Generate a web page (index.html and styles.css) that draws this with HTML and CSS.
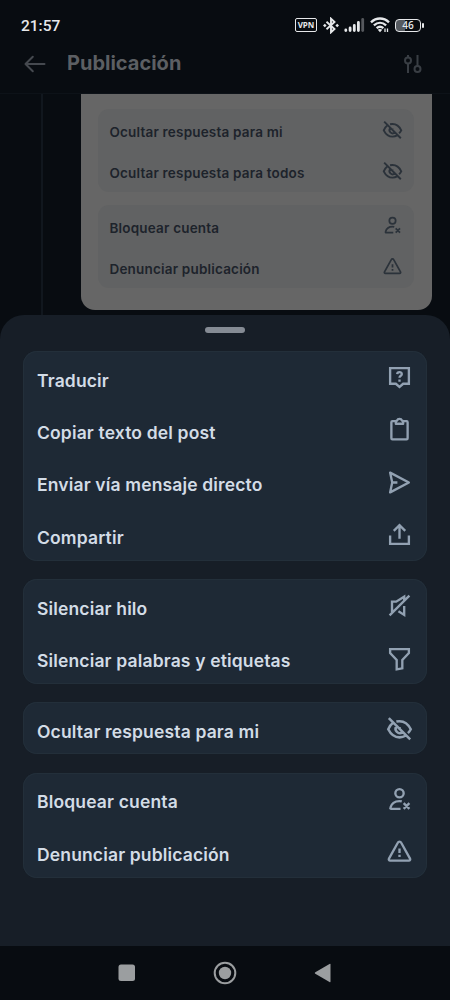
FILE: index.html
```html
<!DOCTYPE html>
<html lang="es">
<head>
<meta charset="utf-8">
<title>Publicación</title>
<link rel="stylesheet" href="styles.css">
</head>
<body>
<svg class="defs" width="0" height="0">
  <symbol id="eye-off" viewBox="0 0 24 24"><path d="M2.500 1.800l19 19M9.200 4.900c.9-.2 1.800-.3 2.800-.3 4.200 0 7.600 2.200 10 7.200-.7 1.400-1.500 2.500-2.500 3.400M6 6.300C4.400 7.500 3.100 9.400 2 11.800c2.500 5 5.800 7.200 10 7.200 1.900 0 3.700-.4 5.200-1.400M9.400 9.200a3.700 3.700 0 0 0 5.200 5.200M12 9.800v2.200"/></symbol>
  <symbol id="person-x" viewBox="0 0 24 24"><circle cx="12" cy="6" r="4"/><path d="M13 21H4c-.6 0-1-.5-.8-1 1-3.800 4.300-6.500 8.800-6.500.8 0 1.500.1 2.200.3M16 15.500l5.500 5.500M21.500 15.500l-5.500 5.500"/></symbol>
  <symbol id="warning" viewBox="0 0 24 24"><path stroke-linejoin="round" d="M12 2.500c-.7 0-1.200.3-1.500.9L1.900 18.800c-.5.900 0 1.900 1.100 1.900h18c1.100 0 1.600-1 1.100-1.900L13.500 3.400c-.3-.6-.8-.9-1.500-.9zM12 9v4.400M12 15v2.300"/></symbol>
  <symbol id="translate" viewBox="0 0 24 24"><path d="M3 3h18v15h-5.500L12 21 8.500 18H3z"/><path d="M9.800 8.800c.1-2.600 4.500-2.500 4.400 0 0 1.600-2.200 1.500-2.200 3.500M12 13.800v2.200"/></symbol>
  <symbol id="clipboard" viewBox="0 0 24 24"><path stroke-linejoin="round" d="M8 4H5.200a1 1 0 0 0-1 1V20.500a1 1 0 0 0 1 1h13.600a1 1 0 0 0 1-1V5a1 1 0 0 0-1-1H16M8.500 6.500V4.500c0-.6.400-1 1-1 1-2.200 4-2.200 5 0 .6 0 1 .4 1 1v2z"/></symbol>
  <symbol id="send" viewBox="0 0 24 24"><path stroke-linejoin="round" d="M3 2.500l18 9.500L3 21.500 5 12zM5 12H10"/></symbol>
  <symbol id="share" viewBox="0 0 24 24"><path d="M12 16V3.500M6.500 8.500L12 3l5.500 5.500M3 13V21h18v-8"/></symbol>
  <symbol id="mute" viewBox="0 0 24 24"><path d="M2.500 21.500L21.500 2.500M6.200 17.200H4.800V8.300h4L16.500 3.500v4M16.500 12.500V21l-5.500-3.500"/></symbol>
  <symbol id="filter" viewBox="0 0 24 24"><path d="M3 3h18v3.700L14.700 13.500V21.500l-5.400 1V13.500L3 6.700z"/></symbol>
</svg>

<div class="phone">
  <div class="status">
    <span class="clock">21:57</span>
    <div class="status-icons">
      <span class="vpn">VPN</span>
      <svg class="bluetooth" width="16" height="17" viewBox="0 0 16 17"><path d="M3.500 4.700l8 7.300L8 15.300V1.700L11.500 5l-8 7.300"/><path class="solid" d="M0 8.500l1.800-1.800 1.800 1.800-1.800 1.800zM12.400 8.500l1.800-1.800L16 8.500l-1.800 1.800z"/></svg>
      <svg class="signal" width="21" height="14" viewBox="0 0 21 14"><path d="M1.800 12v.5M6.100 10v2.500M10.300 7.500v5M14.400 4.500v8"/><path class="weak" d="M18.700 1.500v11"/></svg>
      <svg class="wifi" width="20" height="16" viewBox="0 0 20 16"><path d="M1 5.300c5.300-5 12.700-5 18 0M3.900 8.300c3.700-3.300 8.500-3.300 12.200 0M6.600 11.100c2.100-1.700 4.700-1.700 6.800 0"/><path class="solid" d="M10 15.200l-2.300-2.400q2.300-1.700 4.600 0z"/><path class="thin" d="M15 11.500v3.500M17.500 11.500v3.500"/></svg>
      <span class="battery">46</span>
    </div>
  </div>

  <header class="topbar">
    <svg class="back" width="22" height="18" viewBox="0 0 22 18"><path d="M20.500 9H1.500M8.800 1.700L1.500 9l7.300 7.300"/></svg>
    <h1>Publicación</h1>
    <svg class="settings" width="20" height="20" viewBox="0 0 20 20"><circle cx="5" cy="6.500" r="3"/><path d="M5 1v2.500M5 9.500V19M14.500 1v11"/><circle cx="14.500" cy="15" r="3"/></svg>
  </header>

  <main class="thread">
    <div class="post">
      <div class="group">
        <div class="row"><span>Ocultar respuesta para mi</span><svg class="eye"><use href="#eye-off"/></svg></div>
        <div class="row"><span>Ocultar respuesta para todos</span><svg class="eye"><use href="#eye-off"/></svg></div>
      </div>
      <div class="group">
        <div class="row"><span>Bloquear cuenta</span><svg><use href="#person-x"/></svg></div>
        <div class="row"><span>Denunciar publicación</span><svg><use href="#warning"/></svg></div>
      </div>
    </div>
  </main>

  <section class="sheet">
    <div class="handle"></div>
    <div class="group">
      <div class="row"><span>Traducir</span><svg><use href="#translate"/></svg></div>
      <div class="row"><span>Copiar texto del post</span><svg><use href="#clipboard"/></svg></div>
      <div class="row"><span>Enviar vía mensaje directo</span><svg><use href="#send"/></svg></div>
      <div class="row"><span>Compartir</span><svg><use href="#share"/></svg></div>
    </div>
    <div class="group">
      <div class="row"><span>Silenciar hilo</span><svg><use href="#mute"/></svg></div>
      <div class="row"><span>Silenciar palabras y etiquetas</span><svg><use href="#filter"/></svg></div>
    </div>
    <div class="group">
      <div class="row"><span>Ocultar respuesta para mi</span><svg class="eye"><use href="#eye-off"/></svg></div>
    </div>
    <div class="group">
      <div class="row"><span>Bloquear cuenta</span><svg><use href="#person-x"/></svg></div>
      <div class="row"><span>Denunciar publicación</span><svg><use href="#warning"/></svg></div>
    </div>
  </section>

  <nav class="navbar">
    <svg width="22" height="22" viewBox="0 0 22 22"><rect x="2.500" y="2.500" width="16.500" height="16.500" rx="2.500"/></svg>
    <svg width="24" height="24" viewBox="0 0 24 24"><circle class="ring" cx="12" cy="12" r="10.300"/><circle cx="12" cy="12" r="6.200"/></svg>
    <svg width="22" height="22" viewBox="0 0 22 22"><path d="M3.300 10.200L17.500 1.900q1-.5 1 .5v17.200q0 1-1 .5L3.300 11.800q-1.200-.8 0-1.600z"/></svg>
  </nav>
</div>
</body>
</html>
```
FILE: styles.css
```css
* { box-sizing: border-box; }

body {
  margin: 0;
  background: #080c11;
  font-family: Inter, Roboto, sans-serif;
}

.defs { display: block; }

.phone {
  display: flex;
  flex-direction: column;
  width: 450px;
  height: 1000px;
  overflow: hidden;
}

svg {
  flex: none;
  fill: none;
  stroke: currentColor;
  stroke-width: 2;
}

.status {
  flex: none;
  display: flex;
  justify-content: space-between;
  height: 36px;
  padding: 15px 29px 0 21px;
  color: #e6e8ea;
}

.clock {
  font: 500 15.500px/23px Roboto, sans-serif;
}

.status-icons {
  display: flex;
  align-items: center;
  height: 20px;
}

.vpn {
  width: 22px;
  height: 14px;
  border: 1.500px solid currentColor;
  border-radius: 2px;
  font: 700 8px/12px "Open Sans", sans-serif;
  text-align: center;
}

.bluetooth { margin-left: 6px; stroke-width: 1.900; }
.signal { margin-left: 5px; stroke-width: 2.800; stroke-linecap: round; }
.signal .weak { opacity: .35; }
.wifi { margin-left: 5px; stroke-width: 2.400; }
.wifi .thin { stroke-width: 1.300; }
.solid { fill: currentColor; stroke: none; }

.battery {
  position: relative;
  width: 26px;
  height: 13px;
  margin-left: 5px;
  border: 1.500px solid currentColor;
  border-radius: 4px;
  background: linear-gradient(90deg, #555a60 36%, transparent 36%);
  font: 600 10px/11px "Open Sans", sans-serif;
  text-align: center;
}

.battery::after {
  content: "";
  position: absolute;
  top: 3px;
  right: -3.500px;
  width: 2px;
  height: 5px;
  border-radius: 1px;
  background: currentColor;
}

.topbar {
  flex: none;
  display: flex;
  align-items: center;
  height: 58px;
  padding: 0 27px 2px 24px;
  border-bottom: 1px solid #0d1218;
  color: #5c5f63;
}

.topbar h1 {
  flex: 1;
  margin: 0 0 2px 21px;
  font-size: 20px;
  font-weight: 700;
  line-height: 24px;
}

.back { color: #45494f; stroke-linecap: round; stroke-linejoin: round; }
.settings { color: #393e44; }

.thread {
  flex: none;
  display: flex;
  height: 221px;
  margin-left: 41px;
  padding-left: 38px;
  border-left: 2px solid #11171e;
}

.post {
  display: flex;
  flex-direction: column;
  gap: 13px;
  width: 350.500px;
  height: 216px;
  padding: 15px 17px;
  border-radius: 0 0 14px 14px;
  background: #666;
}

.row {
  display: flex;
  align-items: center;
  justify-content: space-between;
}

.post .group {
  width: 316px;
  height: 83px;
  border-radius: 11px;
  background: #616263;
}

.post .row {
  height: 40.700px;
  padding: 0 12px 0 11.500px;
  color: #1d232b;
  font-size: 13.500px;
  font-weight: 600;
  letter-spacing: .19px;
}

.post .row span { padding-top: 5px; }

.post .row svg {
  width: 19px;
  height: 19px;
  margin-top: 1px;
  color: #2b323a;
  stroke-width: 2.200;
}

.post .row .eye {
  width: 21px;
  height: 21px;
  margin-top: 2px;
  margin-right: -1px;
}

.sheet {
  flex: none;
  display: flex;
  flex-direction: column;
  gap: 18.300px;
  height: 631px;
  padding: 12px 23px 0;
  border-radius: 24px 24px 0 0;
  background: #171e27;
}

.handle {
  align-self: center;
  flex: none;
  width: 40px;
  height: 5.500px;
  border-radius: 3px;
  background: #858b94;
}

.sheet .group {
  border-radius: 14px;
  background: #1e2935;
  box-shadow: inset 0 0 0 1px #232f3a;
}

.sheet .row {
  height: 52.450px;
  padding: 0 15.500px 0 14px;
  color: #d3dce6;
  font-size: 17.500px;
  font-weight: 600;
  letter-spacing: .15px;
}

.sheet .row span { padding-top: 6px; }

.sheet .row svg {
  width: 25px;
  height: 25px;
  margin-top: 1px;
  color: #92a1b2;
  stroke-width: 2.250;
}

.sheet .row .eye {
  width: 27px;
  height: 27px;
  margin-top: 3px;
  margin-right: -1px;
}

.navbar {
  flex: none;
  display: flex;
  align-items: center;
  justify-content: space-between;
  height: 54px;
  padding: 0 116.500px 0 115.500px;
  background: #080c11;
  color: #9b9ea0;
}

.navbar svg { fill: currentColor; stroke: none; }
.navbar .ring { fill: none; stroke: currentColor; stroke-width: 2; }
```
